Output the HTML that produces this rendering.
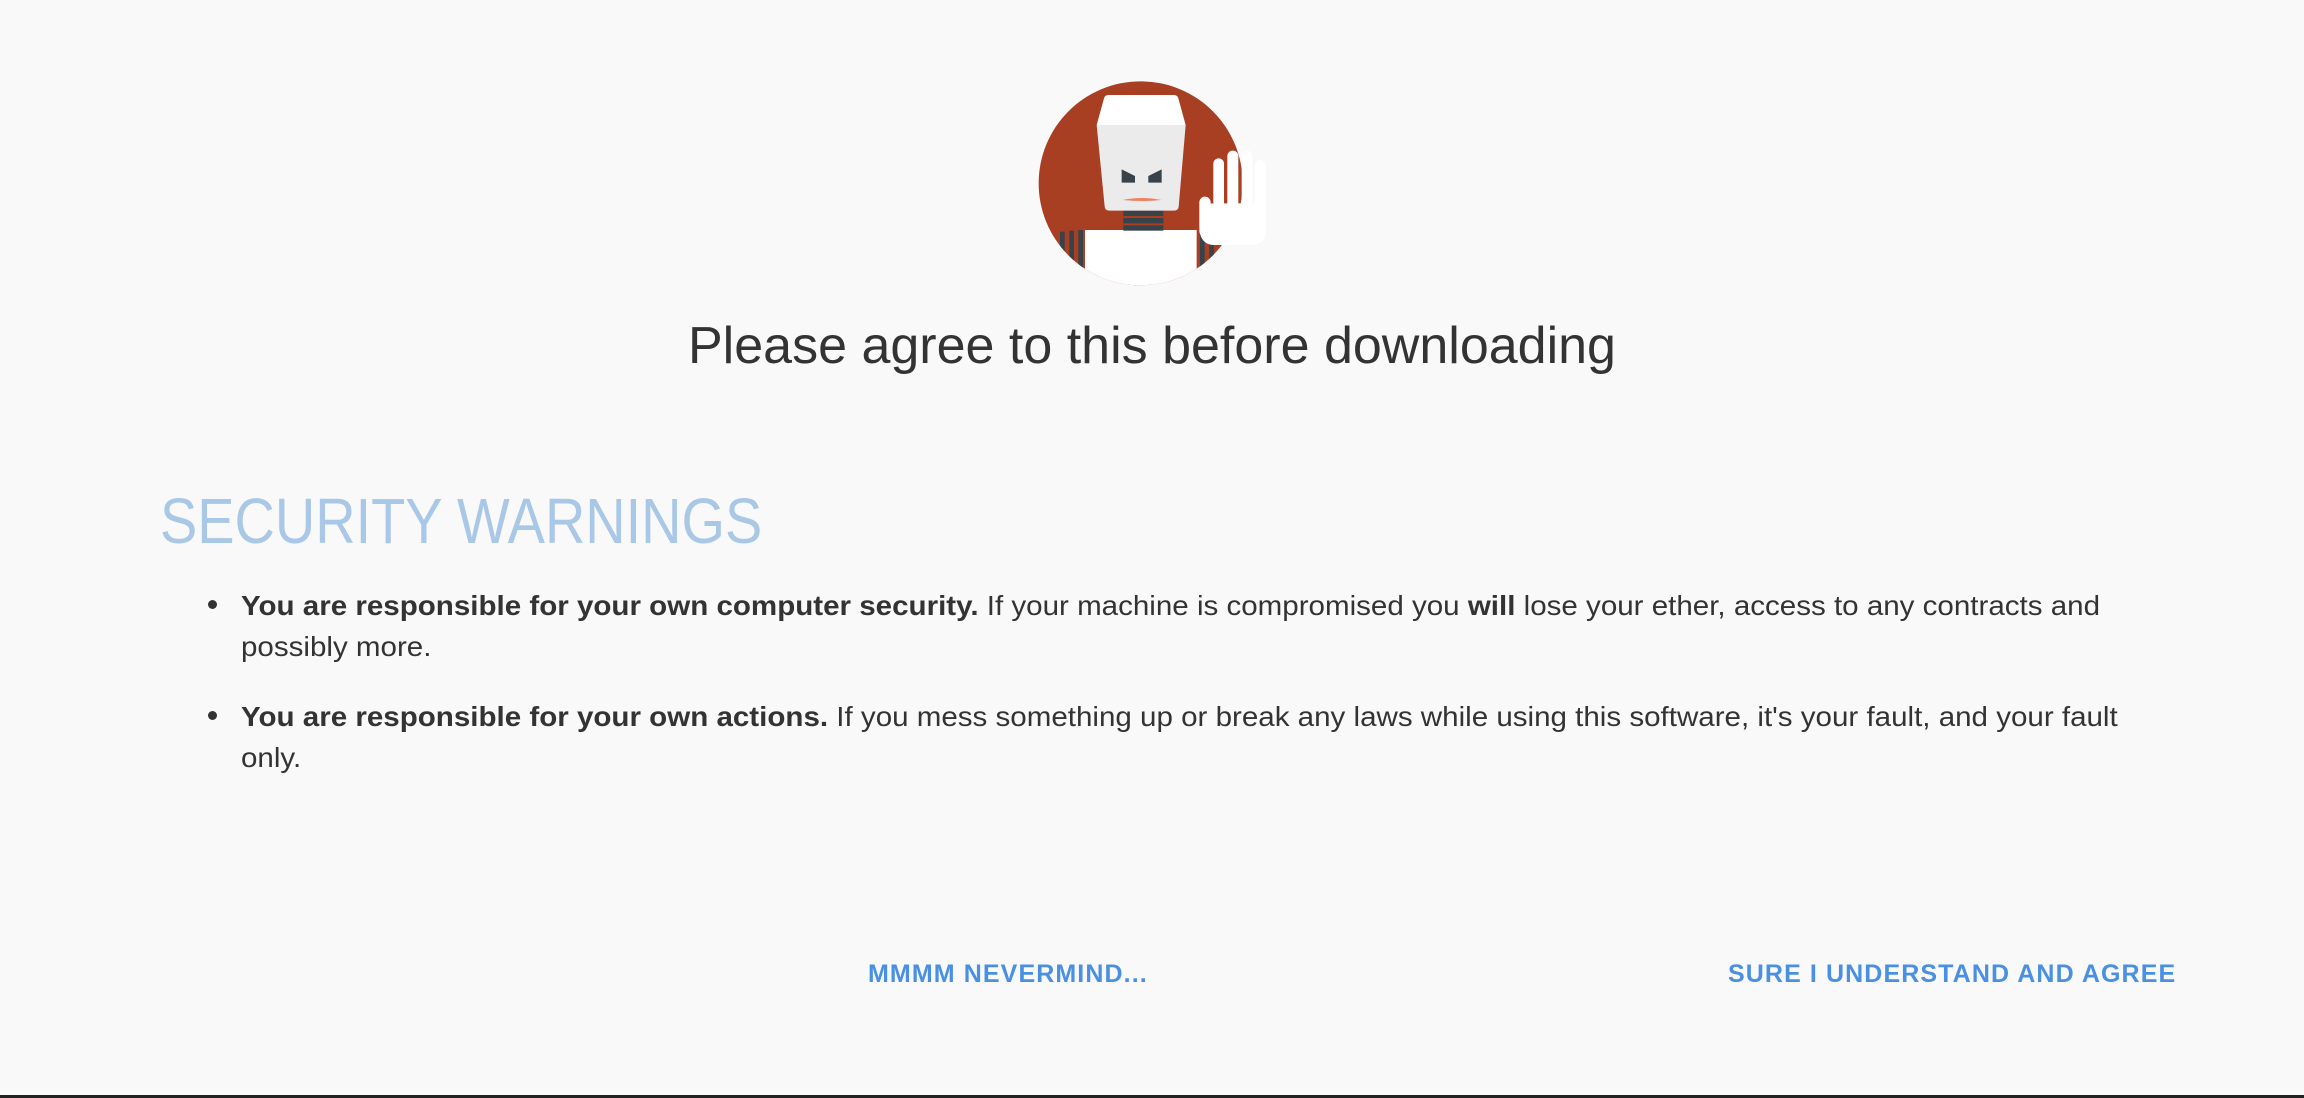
<!DOCTYPE html>
<html><head><meta charset="utf-8"><style>
html,body{margin:0;padding:0;}
body{width:2304px;height:1098px;background:#f9f9f9;position:relative;overflow:hidden;font-family:"Liberation Sans",sans-serif;color:#333;border-bottom:3px solid #222;box-sizing:border-box;}
.abs{position:absolute;white-space:nowrap;}
.title{left:0;width:2304px;text-align:center;top:316px;font-size:52px;color:#333;}
.sec{left:160px;top:484px;font-size:64px;color:#a9c7e6;transform:scaleX(0.873);transform-origin:left top;}
.li{left:241px;font-size:28px;line-height:41px;color:#333;transform:scaleX(1.055);transform-origin:left top;}
.dot{position:absolute;width:9px;height:9px;border-radius:50%;background:#333;left:208px;}
.btn{font-size:25px;font-weight:bold;color:#4a90e2;top:960px;letter-spacing:1.1px;}
</style></head><body>
<svg class="abs" style="left:1020px;top:60px" width="280" height="240" viewBox="0 0 840 720">
<defs><clipPath id="c"><circle cx="362" cy="370" r="306"/></clipPath></defs>
<circle cx="362" cy="370" r="306" fill="#a83e22"/>
<g clip-path="url(#c)">
<rect x="120" y="515" width="14" height="200" fill="#37424a"/>
<rect x="148" y="512" width="14" height="200" fill="#37424a"/>
<rect x="175" y="510" width="14" height="200" fill="#37424a"/>
<rect x="540" y="515" width="14" height="200" fill="#37424a"/>
<rect x="568" y="515" width="14" height="200" fill="#37424a"/>
<rect x="195" y="510" width="335" height="220" fill="#fff"/>
<rect x="310" y="452" width="120" height="60" fill="#37424a"/>
<rect x="310" y="468" width="120" height="6" fill="#a83e22"/>
<rect x="310" y="490" width="120" height="6" fill="#a83e22"/>
</g>
<path d="M265 105 H462 Q472 105 475 115 L497 195 H230 L252 115 Q255 105 265 105Z" fill="#fff"/>
<path d="M230 195 H497 L476 440 Q475 452 462 452 H268 Q255 452 254 440Z" fill="#ebebeb"/>
<path d="M305 328 L345 348 V368 H305Z" fill="#37424a"/>
<path d="M425 328 L385 348 V368 H425Z" fill="#37424a"/>
<path d="M308 420 Q366 408 425 420 Q366 426 308 420Z" fill="#f08060"/>
<g fill="#fff">
<rect x="580" y="295" width="32" height="200" rx="16"/>
<rect x="622" y="272" width="33" height="200" rx="16"/>
<rect x="665" y="272" width="32" height="200" rx="16"/>
<rect x="705" y="300" width="32" height="200" rx="16"/>
<rect x="538" y="410" width="34" height="120" rx="17"/>
<rect x="540" y="430" width="198" height="125" rx="40"/>
</g>
</svg>
<div class="abs title">Please agree to this before downloading</div>
<div class="abs sec">SECURITY WARNINGS</div>
<div class="dot" style="top:600px"></div>
<div class="abs li" style="top:585px"><b>You are responsible for your own computer security.</b> If your machine is compromised you <b>will</b> lose your ether, access to any contracts and<br>possibly more.</div>
<div class="dot" style="top:711px"></div>
<div class="abs li" style="top:696px"><b>You are responsible for your own actions.</b> If you mess something up or break any laws while using this software, it's your fault, and your fault<br>only.</div>
<div class="abs btn" style="left:868px">MMMM NEVERMIND...</div>
<div class="abs btn" style="left:1728px">SURE I UNDERSTAND AND AGREE</div>
</body></html>
